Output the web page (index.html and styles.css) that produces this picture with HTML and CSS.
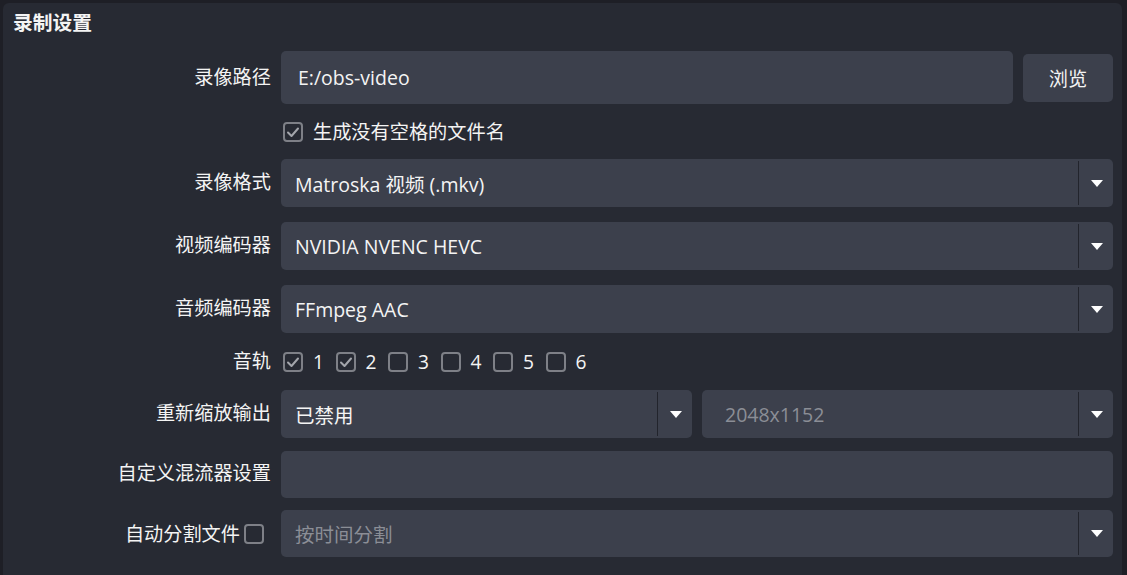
FILE: index.html
```html
<!DOCTYPE html>
<html lang="zh-CN">
<head>
<meta charset="utf-8">
<title>录制设置</title>
<link rel="stylesheet" href="styles.css">
</head>
<body>
<section class="panel">
  <h1 class="panel-title">录制设置</h1>
  <div class="form">
    <div class="form-row row-path">
      <label class="form-label">录像路径</label>
      <div class="field field-path">
        <div class="text-input text-input-tall">E:/obs-video</div>
        <button class="btn">浏览</button>
      </div>
    </div>

    <div class="form-row row-check">
      <span class="form-label"></span>
      <div class="field">
        <span class="check-item">
          <svg class="checkbox" viewBox="0 0 20 20"><rect x="1" y="1" width="18" height="18" rx="3"/><polyline points="5,10.5 8.5,14 15,6.5"/></svg>
          <span class="check-text">生成没有空格的文件名</span>
        </span>
      </div>
    </div>

    <div class="form-row">
      <label class="form-label">录像格式</label>
      <div class="field">
        <div class="combo"><span class="combo-value">Matroska 视频 (.mkv)</span><span class="combo-drop"><span class="arrow"></span></span></div>
      </div>
    </div>

    <div class="form-row">
      <label class="form-label">视频编码器</label>
      <div class="field">
        <div class="combo"><span class="combo-value">NVIDIA NVENC HEVC</span><span class="combo-drop"><span class="arrow"></span></span></div>
      </div>
    </div>

    <div class="form-row">
      <label class="form-label">音频编码器</label>
      <div class="field">
        <div class="combo"><span class="combo-value">FFmpeg AAC</span><span class="combo-drop"><span class="arrow"></span></span></div>
      </div>
    </div>

    <div class="form-row row-tracks">
      <label class="form-label">音轨</label>
      <div class="field tracks">
        <span class="check-item track">
          <svg class="checkbox" viewBox="0 0 20 20"><rect x="1" y="1" width="18" height="18" rx="3"/><polyline points="5,10.5 8.5,14 15,6.5"/></svg>
          <span class="check-text">1</span>
        </span>
        <span class="check-item track">
          <svg class="checkbox" viewBox="0 0 20 20"><rect x="1" y="1" width="18" height="18" rx="3"/><polyline points="5,10.5 8.5,14 15,6.5"/></svg>
          <span class="check-text">2</span>
        </span>
        <span class="check-item track">
          <svg class="checkbox" viewBox="0 0 20 20"><rect x="1" y="1" width="18" height="18" rx="3"/></svg>
          <span class="check-text">3</span>
        </span>
        <span class="check-item track">
          <svg class="checkbox" viewBox="0 0 20 20"><rect x="1" y="1" width="18" height="18" rx="3"/></svg>
          <span class="check-text">4</span>
        </span>
        <span class="check-item track">
          <svg class="checkbox" viewBox="0 0 20 20"><rect x="1" y="1" width="18" height="18" rx="3"/></svg>
          <span class="check-text">5</span>
        </span>
        <span class="check-item track">
          <svg class="checkbox" viewBox="0 0 20 20"><rect x="1" y="1" width="18" height="18" rx="3"/></svg>
          <span class="check-text">6</span>
        </span>
      </div>
    </div>

    <div class="form-row">
      <label class="form-label">重新缩放输出</label>
      <div class="field field-split">
        <div class="combo"><span class="combo-value">已禁用</span><span class="combo-drop"><span class="arrow"></span></span></div>
        <div class="combo combo-disabled"><span class="combo-value combo-value-wide">2048x1152</span><span class="combo-drop"><span class="arrow"></span></span></div>
      </div>
    </div>

    <div class="form-row row-tight">
      <label class="form-label">自定义混流器设置</label>
      <div class="field">
        <div class="text-input"></div>
      </div>
    </div>

    <div class="form-row row-tight row-last">
      <label class="form-label form-label-check">自动分割文件<svg class="checkbox" viewBox="0 0 20 20"><rect x="1" y="1" width="18" height="18" rx="3"/></svg></label>
      <div class="field">
        <div class="combo combo-disabled"><span class="combo-value">按时间分割</span><span class="combo-drop"><span class="arrow"></span></span></div>
      </div>
    </div>
  </div>
</section>
</body>
</html>
```

FILE: styles.css
```css
* {
  box-sizing: border-box;
}

html, body {
  margin: 0;
  padding: 0;
  height: 100%;
  overflow: hidden;
}

body {
  background: #1e1f26;
  font-family: "Open Sans", "Noto Sans CJK SC", sans-serif;
  font-size: 19.2px;
  color: #f4f4f4;
}

.panel {
  margin: 3px 5px 0 3px;
  min-height: 600px;
  background: #272a33;
  border-radius: 6px;
  padding: 6px 9px 20px 10px;
}

.panel-title {
  margin: 0 0 17px 0;
  font-size: 19.8px;
  line-height: 25px;
  font-weight: bold;
  font-family: "Noto Sans CJK SC", sans-serif;
}

.form {
  display: flex;
  flex-direction: column;
}

.form-row {
  display: flex;
  align-items: center;
  margin-top: 15px;
  min-height: 48px;
}

.form-row:first-child {
  margin-top: 0;
}

.row-tight {
  margin-top: 12px;
}

.row-last {
  min-height: 47px;
}

.row-path {
  min-height: 53px;
}

.row-check {
  min-height: 25px;
}

.row-tracks {
  min-height: 27px;
}

.form-label {
  flex: 0 0 258px;
  margin-right: 10px;
  text-align: right;
  font-family: "Noto Sans CJK SC", sans-serif;
  line-height: 25px;
  margin-top: -3px;
}

.form-label-check {
  display: flex;
  justify-content: flex-end;
  align-items: center;
  gap: 4px;
  padding-right: 7px;
  margin-top: 0;
}

.field {
  flex: 1;
  display: flex;
  align-items: center;
}

.field-path {
  gap: 10px;
}

.text-input {
  flex: 1;
  height: 47px;
  background: #3c404c;
  border-radius: 5px;
  padding: 0 17px;
  display: flex;
  align-items: center;
  font-size: 19.5px;
}

.text-input-tall {
  height: 53px;
}

.btn {
  flex: 0 0 90px;
  height: 48px;
  border: none;
  border-radius: 5px;
  background: #3c404c;
  color: #f4f4f4;
  font-family: "Noto Sans CJK SC", sans-serif;
  font-size: 19.2px;
  padding: 0;
}

.combo {
  flex: 1;
  height: 48px;
  display: flex;
  background: #3c404c;
  border-radius: 5px;
}

.row-last .combo {
  height: 47px;
}

.combo-value {
  flex: 1;
  display: flex;
  align-items: center;
  padding-left: 14px;
  white-space: nowrap;
  font-size: 19.5px;
}

.combo-value-wide {
  padding-left: 23px;
}

.combo-disabled .combo-value {
  color: #8b8e96;
}

.combo-drop {
  flex: 0 0 35px;
  margin: 2px 0;
  border-left: 1px solid #22242c;
  display: flex;
  align-items: center;
  justify-content: center;
}

.arrow {
  width: 0;
  height: 0;
  border-left: 6px solid transparent;
  border-right: 6px solid transparent;
  border-top: 7px solid #ffffff;
  margin-left: 1px;
}

.field-split {
  gap: 10px;
}

.checkbox {
  width: 20px;
  height: 20px;
  flex: 0 0 20px;
  display: block;
}

.checkbox rect {
  fill: none;
  stroke: #7e8087;
  stroke-width: 2;
}

.checkbox polyline {
  fill: none;
  stroke: #a3a5ab;
  stroke-width: 2;
  stroke-linecap: round;
  stroke-linejoin: round;
}

.check-item {
  display: inline-flex;
  align-items: center;
  gap: 10px;
  margin-left: 2px;
}

.check-text {
  font-family: "Noto Sans CJK SC", sans-serif;
  line-height: 25px;
}

.tracks {
  gap: 0;
}

.track {
  width: 52.5px;
  margin-left: 0;
}

.track:first-child {
  margin-left: 2px;
}

.track .check-text {
  font-family: "Open Sans", sans-serif;
}
```
